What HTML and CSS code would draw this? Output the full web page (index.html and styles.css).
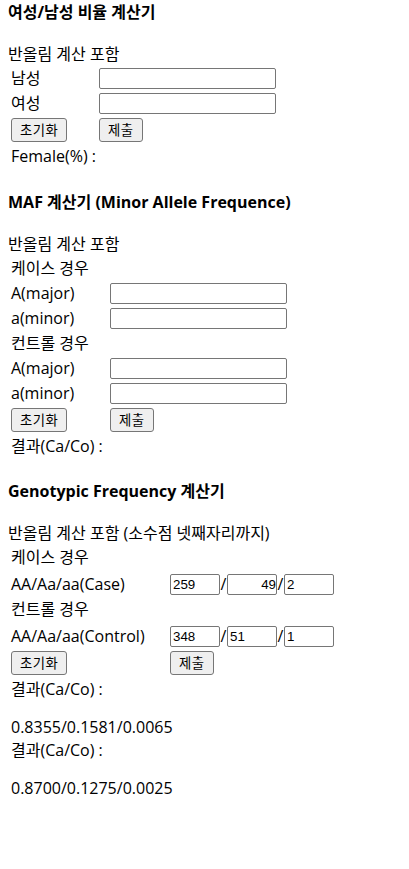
FILE: index.html
```html
<!DOCTYPE html>
<html lang="ko">
<head>
<meta charset="utf-8">
<title>계산기</title>
<link rel="stylesheet" href="styles.css">
</head>
<body>
<section class="calc calc-1">
  <h4 class="title">여성/남성 비율 계산기</h4>
  <div class="note">반올림 계산 포함</div>
  <div class="rows g1">
    <div class="row"><span class="label">남성</span><input class="field" type="text"></div>
    <div class="row"><span class="label">여성</span><input class="field" type="text"></div>
    <div class="row btn-row"><span class="label"><button class="btn" type="button">초기화</button></span><button class="btn" type="button">제출</button></div>
    <div class="row"><span class="label">Female(%) :</span></div>
  </div>
</section>

<section class="calc calc-2">
  <h4 class="title">MAF 계산기 (Minor Allele Frequence)</h4>
  <div class="note">반올림 계산 포함</div>
  <div class="rows g2">
    <div class="row"><span class="label">케이스 경우</span></div>
    <div class="row"><span class="label">A(major)</span><input class="field" type="text"></div>
    <div class="row"><span class="label">a(minor)</span><input class="field" type="text"></div>
    <div class="row"><span class="label">컨트롤 경우</span></div>
    <div class="row"><span class="label">A(major)</span><input class="field" type="text"></div>
    <div class="row"><span class="label">a(minor)</span><input class="field" type="text"></div>
    <div class="row btn-row"><span class="label"><button class="btn" type="button">초기화</button></span><button class="btn" type="button">제출</button></div>
    <div class="row"><span class="label">결과(Ca/Co) :</span></div>
  </div>
</section>

<section class="calc calc-3">
  <h4 class="title">Genotypic Frequency 계산기</h4>
  <div class="note">반올림 계산 포함 (소수점 넷째자리까지)</div>
  <div class="rows g3">
    <div class="row"><span class="label">케이스 경우</span></div>
    <div class="row pair-row"><span class="label">AA/Aa/aa(Case)</span><input class="field mini" type="text" value="259"><span class="slash">/</span><input class="field mini end" type="text" value="49"><span class="slash">/</span><input class="field mini" type="text" value="2"></div>
    <div class="row"><span class="label">컨트롤 경우</span></div>
    <div class="row pair-row"><span class="label">AA/Aa/aa(Control)</span><input class="field mini" type="text" value="348"><span class="slash">/</span><input class="field mini" type="text" value="51"><span class="slash">/</span><input class="field mini" type="text" value="1"></div>
    <div class="row btn-row"><span class="label"><button class="btn" type="button">초기화</button></span><button class="btn" type="button">제출</button></div>
    <div class="row"><span class="label">결과(Ca/Co) :</span></div>
  </div>
  <div class="result">0.8355/0.1581/0.0065</div>
  <div class="rows single">
    <div class="row"><span class="label">결과(Ca/Co) :</span></div>
  </div>
  <div class="result">0.8700/0.1275/0.0025</div>
</section>
</body>
</html>
```

FILE: styles.css
```css
* {
  box-sizing: border-box;
}

body {
  margin: 0 8px;
  font-family: "Open Sans", "Noto Sans CJK KR", sans-serif;
  font-size: 16px;
  line-height: 21px;
  color: #000;
  background: #fff;
}

.title {
  margin: 21px 0;
  height: 21px;
  font-size: 16px;
  line-height: 21px;
  font-weight: 700;
}

.calc-1 .title {
  margin-top: 2px;
}

.calc-2 .title {
  margin-top: 22px;
}

.note {
  height: 21px;
  white-space: nowrap;
}

.rows {
  display: flex;
  flex-direction: column;
  gap: 2px;
  padding: 2px 0 2px 3px;
}

.rows.single {
  padding-top: 1px;
}

.row {
  display: flex;
  align-items: center;
  height: 23px;
  white-space: nowrap;
}

.row.btn-row {
  height: 26px;
}

.row.pair-row {
  height: 25px;
  padding-top: 2px;
}

.label {
  flex: none;
}

.g1 .label {
  width: 88px;
}

.g2 .label {
  width: 99px;
}

.g3 .label {
  width: 159px;
}

.field {
  width: 177px;
  height: 21px;
  margin: 0;
  padding: 1px 2px;
  border: 1px solid #767676;
  border-radius: 2px;
  background: #fff;
  color: #000;
  font-family: "Liberation Sans", Arial, sans-serif;
  font-size: 13.33px;
}

.field.mini {
  width: 50px;
}

.field.end {
  text-align: right;
  padding-right: 0;
}

.slash {
  display: inline-block;
  width: 7px;
  text-align: center;
}

.btn {
  height: 24px;
  margin: 0;
  padding: 0 8px;
  border: 1px solid #767676;
  border-radius: 3px;
  background: #efefef;
  color: #000;
  font-family: "Open Sans", "Noto Sans CJK KR", sans-serif;
  font-size: 13.33px;
  line-height: 20px;
  letter-spacing: 0.5px;
}

.result {
  margin-top: 14px;
  height: 21px;
  padding-left: 3px;
}
```
